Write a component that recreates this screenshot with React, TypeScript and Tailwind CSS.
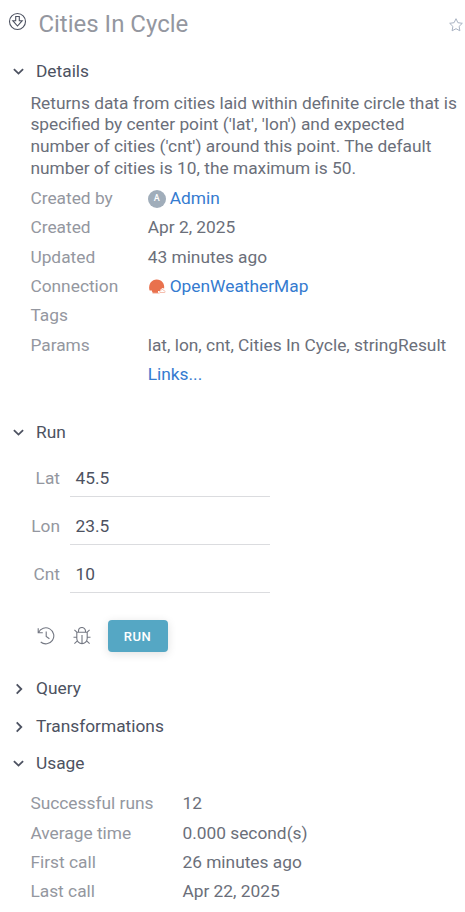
import type { ReactNode } from "react";

function Chevron({ open }: { open: boolean }) {
  return (
    <svg className="ml-px w-3 h-3 shrink-0" viewBox="0 0 12 12" fill="none" stroke="#4d5261" strokeWidth="1.8">
      {open ? <path d="M.9 3.1 5.5 7.6l4.6-4.5" /> : <path d="M3.7 1.3 8.3 6l-4.6 4.7" />}
    </svg>
  );
}

function SectionHeader({ title, open = false }: { title: string; open?: boolean }) {
  return (
    <div className="flex h-6 items-center gap-[11px] pl-3 text-[#4d5261]">
      <Chevron open={open} />
      <span>{title}</span>
    </div>
  );
}

function Row({ label, wide = false, children }: { label: string; wide?: boolean; children?: ReactNode }) {
  return (
    <div className="flex h-[29.33px] items-center whitespace-nowrap pl-[30.4px]">
      <span className={wide ? "w-[152px] text-[#9497a0]" : "w-[117.3px] text-[#9497a0]"}>{label}</span>
      <span className="flex items-center text-[#6b6f7a]">{children}</span>
    </div>
  );
}

function Field({ label, value }: { label: string; value: string }) {
  return (
    <div className="flex h-12 items-start">
      <label className="w-[60px] pt-1.5 text-right leading-6 text-[#9497a0]">{label}</label>
      <div className="ml-2.5 h-[37px] w-[200px] border-b border-[#dbdcdf] pl-[5.5px] pt-1.5 leading-6 text-[#4d5261]">
        {value}
      </div>
    </div>
  );
}

function WeatherLogo() {
  return (
    <svg className="mr-1 h-[18px] w-[18px]" viewBox="0 0 18 18">
      <path d="M1.3 11.7C.4 5.7 3.8 1.5 8.7 1.5s8.3 4.2 7.4 9.2c-.8-.9-2.2-.7-2.7.2-.9.3-1.3 1.2-1.2 2.2H10v1.8H4.8l-1-2z" fill="#e9714d" />
      <path d="M1.5 12.5h2.5M4.5 15.2h7" stroke="#f4b7a5" strokeWidth=".9" fill="none" />
      <path d="M12 14.5c-.6-1 0-2.4 1.2-2.2.3-1.3 2-1.2 2.2 0 1.3-.2 1.9 1.2 1.4 2.2z" stroke="#f4b7a5" strokeWidth=".9" fill="#fff" />
    </svg>
  );
}

function HistoryIcon() {
  return (
    <svg className="h-[18px] w-[18px]" viewBox="0 0 18 18" fill="none" stroke="#747883" strokeWidth="1.1">
      <path d="M1.2 1.2v4.6h4.6M1.5 5.6A8 8 0 1 1 3.7 15M9.2 4.5v5l3.2 2.2" />
    </svg>
  );
}

function BugIcon() {
  return (
    <svg className="h-[18px] w-[18px]" viewBox="0 0 18 18" fill="none" stroke="#747883" strokeWidth="1.1">
      <path d="M5.5 5V4a3.5 3.5 0 0 1 7 0v1M3.8 5.2h10.4v6.2a5.2 5.2 0 0 1-10.4 0zM9 8v8.5M.5 10.2h3.3M14.2 10.2h3.3M1.4 2.8l2.4 2.4M16.6 2.8l-2.4 2.4M1.4 16.6l3.2-2.9M16.6 16.6l-3.2-2.9" />
    </svg>
  );
}

export default function App() {
  return (
    <main className="h-[912px] w-[465px] overflow-hidden bg-white font-['Roboto',sans-serif] text-[17.33px]">
      <header className="flex h-[48px] items-center pl-2">
        <svg className="mb-[5px] h-[19px] w-[19px]" viewBox="0 0 19 19" fill="none" stroke="#4d5261" strokeWidth="1.1">
          <circle cx="9.5" cy="9.5" r="8" />
          <path d="M7.7 4.5h3.6v4.2h2.9L9.5 14 4.8 8.7h2.9z" />
        </svg>
        <h1 className="ml-[11.4px] text-[24px] text-[#9497a0]">Cities In Cycle</h1>
        <svg className="ml-auto mr-px mt-0.5 h-4 w-4" viewBox="0 0 16 16" fill="none" stroke="#a9b3c3" strokeWidth="1">
          <path d="m8 1.7 1.9 4 4.4.6-3.2 3.1.8 4.4L8 11.7l-3.9 2.1.8-4.4-3.2-3.1 4.4-.6z" />
        </svg>
      </header>

      <div className="pt-3">
        <SectionHeader title="Details" open />
      </div>
      <p className="whitespace-nowrap pl-[30.4px] pt-[8.7px] leading-[21.8px] text-[#6b6f7a]">
        Returns data from cities laid within definite circle that is<br />
        specified by center point ('lat', 'lon') and expected<br />
        number of cities ('cnt') around this point. The default<br />
        number of cities is 10, the maximum is 50.
      </p>
      <div className="pt-[4.4px]">
        <Row label="Created by">
          <span className="mr-1 flex h-[18px] w-[18px] items-center justify-center rounded-full bg-[#a0adba] text-[9px] font-medium text-white">A</span>
          <a className="text-[#357bd0]">Admin</a>
        </Row>
        <Row label="Created">Apr 2, 2025</Row>
        <Row label="Updated">43 minutes ago</Row>
        <Row label="Connection">
          <WeatherLogo />
          <a className="text-[#357bd0]">OpenWeatherMap</a>
        </Row>
        <Row label="Tags" />
        <Row label="Params">lat, lon, cnt, Cities In Cycle, stringResult</Row>
        <Row label=""><a className="text-[#357bd0]">Links...</a></Row>
      </div>

      <div className="pt-[31.7px]">
        <SectionHeader title="Run" open />
      </div>
      <div className="pt-[15px]">
        <Field label="Lat" value="45.5" />
        <Field label="Lon" value="23.5" />
        <Field label="Cnt" value="10" />
      </div>
      <div className="flex items-center gap-[18px] pl-[37px] pt-4">
        <HistoryIcon />
        <BugIcon />
        <button className="-ml-px h-8 w-[60px] rounded bg-[#55a7c4] pr-px text-[13px] font-medium tracking-[0.5px] text-white shadow-[0_2px_10px_rgba(0,0,0,0.12)]">RUN</button>
      </div>

      <div className="flex flex-col gap-[13.5px] pt-[25px]">
        <SectionHeader title="Query" />
        <SectionHeader title="Transformations" />
        <SectionHeader title="Usage" open />
      </div>
      <div className="pt-[13.5px]">
        <Row label="Successful runs" wide>12</Row>
        <Row label="Average time" wide>0.000 second(s)</Row>
        <Row label="First call" wide>26 minutes ago</Row>
        <Row label="Last call" wide>Apr 22, 2025</Row>
      </div>
    </main>
  );
}
